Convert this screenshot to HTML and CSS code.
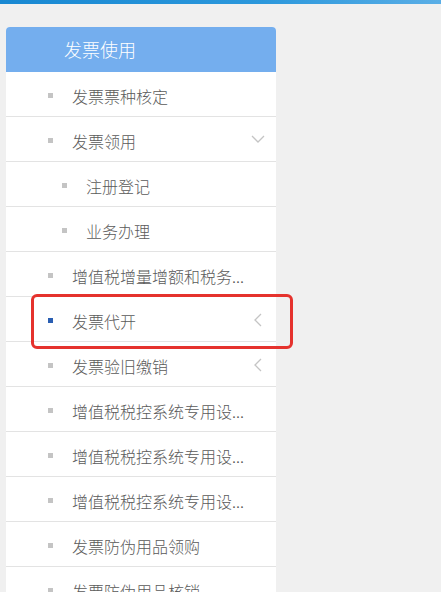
FILE: index.html
```html
<!DOCTYPE html>
<html>
<head>
<meta charset="utf-8">
<meta name="viewport" content="width=device-width, initial-scale=1.0">
<link rel="stylesheet" href="styles.css">
<title>发票使用</title>
</head>
<body>
 <!-- top bar -->
 <div class="topbar"></div>

 <div class="menu">
  <div class="menu-head">发票使用</div>
  <ul class="menu-list">
   <li class="item"><span class="dot"></span><span class="label">发票票种核定</span></li>
   <li class="item"><span class="dot"></span><span class="label">发票领用</span>
    <svg class="arrow" width="14" height="8" viewBox="0 0 14 8"><path d="M1 1 L7 7 L13 1" fill="none" stroke="#c4c4c4" stroke-width="1.3"/></svg>
   </li>
   <li class="item sub"><span class="dot"></span><span class="label">注册登记</span></li>
   <li class="item sub"><span class="dot"></span><span class="label">业务办理</span></li>
   <li class="item"><span class="dot"></span><span class="label">增值税增量增额和税务...</span></li>
   <li class="item active"><span class="dot"></span><span class="label">发票代开</span>
    <svg class="arrow left" width="8" height="14" viewBox="0 0 8 14"><path d="M7 1 L1 7 L7 13" fill="none" stroke="#c4c4c4" stroke-width="1.3"/></svg>
    <div class="mark"></div>
   </li>
   <li class="item"><span class="dot"></span><span class="label">发票验旧缴销</span>
    <svg class="arrow left" width="8" height="14" viewBox="0 0 8 14"><path d="M7 1 L1 7 L7 13" fill="none" stroke="#c4c4c4" stroke-width="1.3"/></svg>
   </li>
   <li class="item"><span class="dot"></span><span class="label">增值税税控系统专用设...</span></li>
   <li class="item"><span class="dot"></span><span class="label">增值税税控系统专用设...</span></li>
   <li class="item"><span class="dot"></span><span class="label">增值税税控系统专用设...</span></li>
   <li class="item"><span class="dot"></span><span class="label">发票防伪用品领购</span></li>
   <li class="item"><span class="dot"></span><span class="label">发票防伪用品核销</span></li>
  </ul>
 </div>
</body>
</html>
```

FILE: styles.css
```css
* {
  box-sizing: border-box;
}

body {
  margin: 0;
  background-color: #f0f0f0;
  font-family: "Noto Sans CJK SC", "Noto Sans", sans-serif;
}

.topbar {
  height: 4px;
  background: linear-gradient(to right, #1888d2, #2c98dc 60%, #5aaee6);
}

.menu {
  width: 270px;
  margin: 23px 0 0 6px;
  background-color: #ffffff;
  border-radius: 4px 4px 0 0;
}

.menu-head {
  height: 45px;
  line-height: 45px;
  padding-left: 58px;
  background-color: #74aeee;
  color: #ffffff;
  font-size: 18px;
  font-weight: 300;
  border-radius: 4px 4px 0 0;
}

.menu-list {
  list-style: none;
  margin: 0;
  padding: 0;
}

.item {
  position: relative;
  height: 45px;
  display: flex;
  align-items: center;
  padding: 3px 30px 0 42px;
  border-bottom: 1px solid #e3e3e3;
  color: #5a5a5a;
  font-size: 16px;
  font-weight: 300;
}

.item.sub {
  padding-left: 56px;
}

.dot {
  flex: none;
  width: 5px;
  height: 5px;
  margin-right: 19px;
  background-color: #c4c4c4;
}

.label {
  white-space: nowrap;
}

.arrow {
  position: absolute;
  right: 11px;
  top: 18px;
}

.arrow.left {
  right: 14px;
  top: 16px;
}

/* selected row */
.item.active .dot {
  background-color: #2a5eb2;
}

/* red highlight frame over the selected row */
.mark {
  position: absolute;
  left: 25px;
  top: -3px;
  right: -17px;
  bottom: -8px;
  border: 3px solid #e5322d;
  border-radius: 6px;
}
```
